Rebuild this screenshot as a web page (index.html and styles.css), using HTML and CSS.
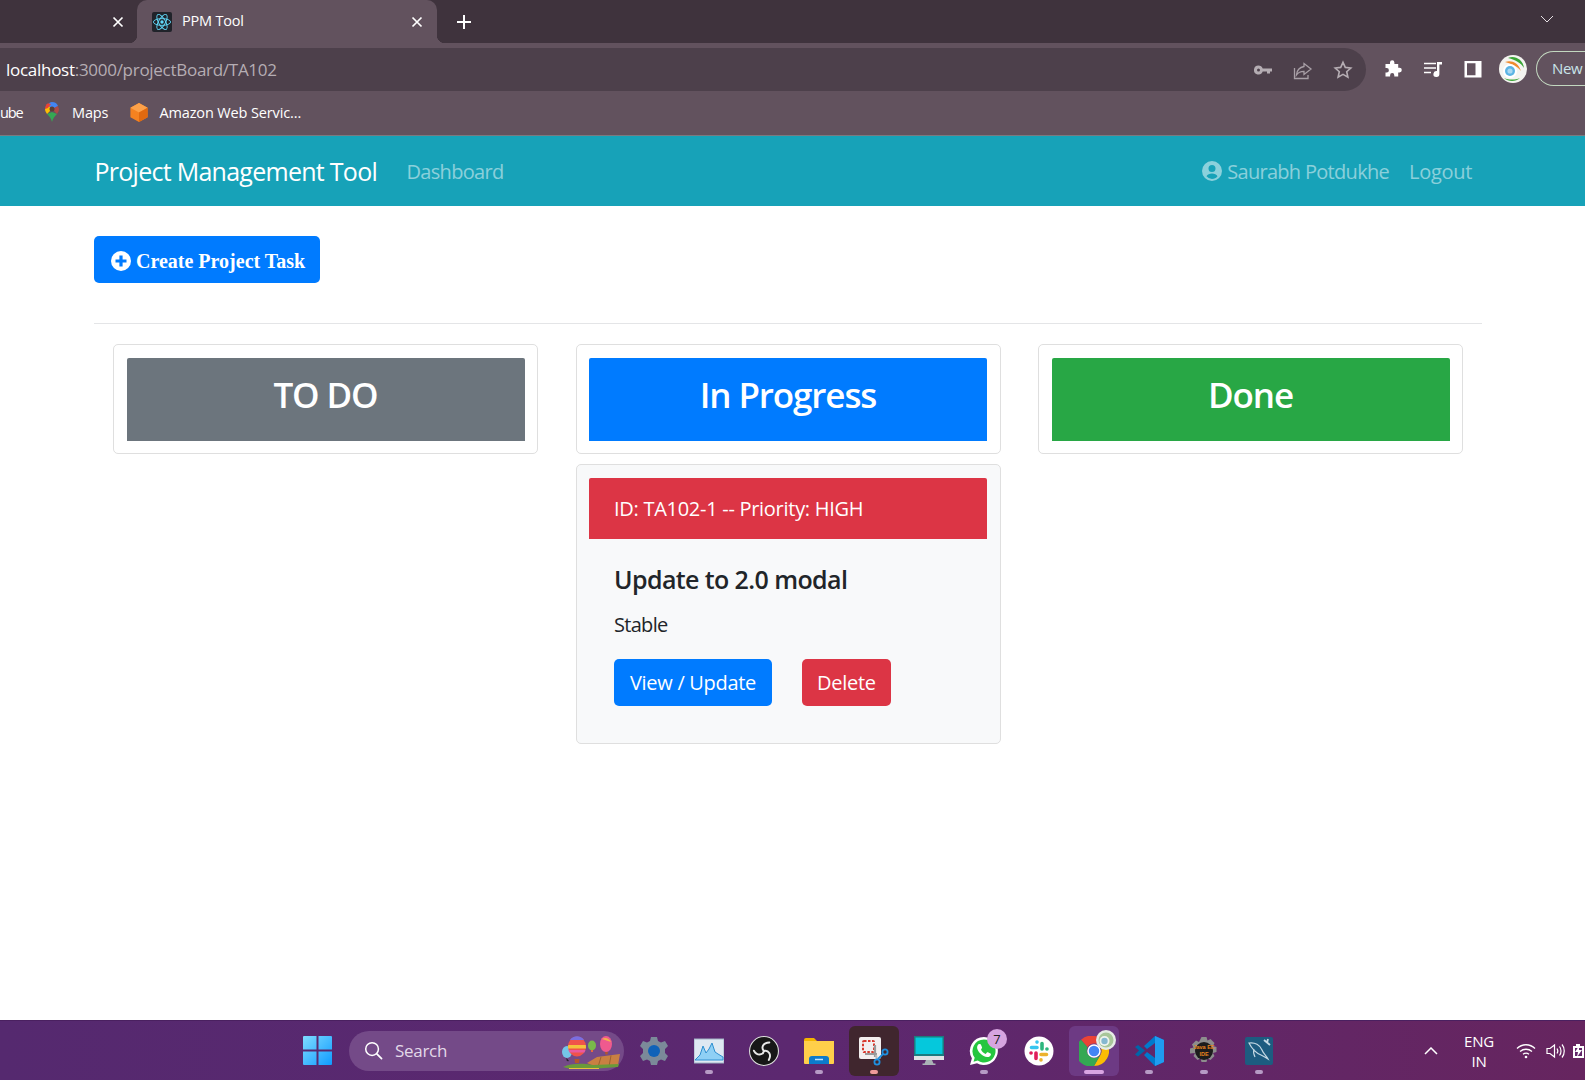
FILE: index.html
```html
<!DOCTYPE html>
<html lang="en">
<head>
<meta charset="utf-8">
<title>PPM Tool</title>
<link rel="stylesheet" href="styles.css">
</head>
<body>
<div class="tabstrip">
  <div class="tab-prev"><svg class="tab-x" viewBox="0 0 12 12"><path d="M1.5 1.5l9 9M10.5 1.5l-9 9"/></svg></div>
  <div class="tab-active">
    <svg class="favicon" viewBox="0 0 20 20"><rect width="20" height="20" rx="2" fill="#20232a"/><g fill="none" stroke="#61dafb" stroke-width=".9"><ellipse cx="10" cy="10" rx="8.6" ry="3.4"/><ellipse cx="10" cy="10" rx="8.6" ry="3.4" transform="rotate(60 10 10)"/><ellipse cx="10" cy="10" rx="8.6" ry="3.4" transform="rotate(120 10 10)"/></g><circle cx="10" cy="10" r="1.7" fill="#61dafb"/></svg>
    <span class="tab-title">PPM Tool</span>
    <svg class="tab-x" viewBox="0 0 12 12"><path d="M1.5 1.5l9 9M10.5 1.5l-9 9"/></svg>
  </div>
  <svg class="tab-plus" viewBox="0 0 16 16"><path d="M8 1v14M1 8h14"/></svg>
  <svg class="tab-down" viewBox="0 0 14 8"><path d="M1 1l6 6 6-6"/></svg>
</div>
<div class="toolbar">
  <div class="omnibox">
    <div class="url"><span class="url-host">localhost</span>:3000/projectBoard/TA102</div>
    <svg class="omni-icon" viewBox="0 0 20 20"><path fill="#b5adb3" d="M5.5 5.5a4.5 4.5 0 0 1 4.2 3H19v3h-2v2h-3v-2H9.700a4.500 4.500 0 1 1-4.200-6zm0 3a1.500 1.500 0 1 0 0 3 1.500 1.500 0 0 0 0-3z"/></svg>
    <svg class="omni-icon" viewBox="0 0 20 20"><path fill="none" stroke="#a89fa6" stroke-width="1.300" d="M11 3.500l7 5.500-7 5.500v-3.200c-3.500 0-5.800 1-7.500 3.500.4-4.500 3-7.500 7.500-8.300zM1.500 8v10.500H15V15"/></svg>
    <svg class="omni-icon" viewBox="0 0 20 20"><path fill="none" stroke="#b5adb3" stroke-width="1.600" d="M10 2.300l2.300 5.100 5.500.6-4.100 3.700 1.200 5.500L10 14.400l-4.900 2.800 1.200-5.500L2.200 8l5.500-.6z"/></svg>
  </div>
  <div class="tool-actions">
    <svg class="tool-icon" viewBox="0 0 20 20"><path fill="#fff" d="M7 3.500a2.200 2.200 0 0 1 4.400 0V5h3.800v3.800h1.300a2.300 2.300 0 0 1 0 4.600h-1.300v4.100h-3.900v-1.300a2.100 2.100 0 0 0-4.200 0v1.300H2.500v-4h1.200a2.200 2.200 0 0 0 0-4.400H2.500V5H7z"/></svg>
    <svg class="tool-icon" viewBox="0 0 20 20"><path fill="none" stroke="#fff" stroke-width="1.700" d="M1 4.500h12M1 9h12M1 13.500h7"/><path fill="#fff" d="M14 3h5v2.400h-2.600V15a3 3 0 1 1-2.400-2.900z"/></svg>
    <svg class="tool-icon" viewBox="0 0 20 20"><path fill="#fff" fill-rule="evenodd" d="M1.500 2h17v16.500h-17zM4 4.300v11.900h8.500V4.300z"/></svg>
    <svg class="avatar" viewBox="0 0 28 28"><circle cx="14" cy="14" r="14" fill="#f4f4f0"/><path fill="#3aa536" d="M9 3c6-3 15 1 16 10-3-5-8-8-16-10z"/><path fill="#ef8a2c" d="M6 7c6-2 13 0 16 9-4-5-9-7-16-9z"/><circle cx="11" cy="16" r="7" fill="#fff"/><circle cx="11" cy="16" r="5" fill="#5bb4e4"/><circle cx="11" cy="16" r="2.600" fill="#a9d8f2"/><path fill="#3aa536" d="M5 23c4 4 12 4 16 0-5 2-11 2-16 0z"/></svg>
    <div class="new-pill">New</div>
  </div>
</div>
<div class="bookmarks">
  <span class="bm-cut">ube</span>
  <div class="bm bm-maps">
    <svg class="bm-icon" viewBox="0 0 16 20"><path fill="#34a853" d="M8 20c-1-4-3-6-5-8l5-2 5 2c-2 2-4 4-5 8z"/><path fill="#fbbc04" d="M1 7c0 2 1 3.500 2 5l5-5-4-4z"/><path fill="#4285f4" d="M8 0c3 0 5 1.500 6 4l-6 3-4-4c1-2 2-3 4-3z"/><path fill="#ea4335" d="M4 1.200C2 2.400 1 4.500 1 7l3-1 3-4z"/><path fill="#ea4335" d="M15 7c0 2-1 3.500-2 5L8 7l6-3z" opacity=".55"/><circle cx="8" cy="7" r="2.500" fill="#5b3e35"/></svg>
    <span>Maps</span>
  </div>
  <div class="bm">
    <svg class="bm-icon aws" viewBox="0 0 20 22"><path fill="#f58220" d="M10 1l9 5v10l-9 5-9-5V6z"/><path fill="#fca14a" d="M10 1l9 5-9 5-9-5z"/><path fill="#e0690f" d="M10 11l9-5v10l-9 5z"/></svg>
    <span>Amazon Web Servic...</span>
  </div>
</div>
<nav class="navbar">
  <a class="brand">Project Management Tool</a>
  <a class="nav-link">Dashboard</a>
  <div class="nav-right">
    <a class="nav-link nav-user"><svg class="user-icon" viewBox="0 0 20 20"><path fill="currentColor" fill-rule="evenodd" d="M10 0a10 10 0 1 1 0 20 10 10 0 0 1 0-20zm0 4a3.500 3.500 0 1 0 0 7 3.500 3.500 0 0 0 0-7zm0 8.500c-2.500 0-4.500 1-5.500 2.700A7.600 7.600 0 0 0 10 18c2.200 0 4.200-1 5.500-2.800-1-1.700-3-2.700-5.500-2.700z"/></svg>Saurabh Potdukhe</a>
    <a class="nav-link nav-logout">Logout</a>
  </div>
</nav>
<main class="page">
  <a class="btn btn-create"><svg class="plus-icon" viewBox="0 0 20 20"><circle cx="10" cy="10" r="10" fill="#fff"/><path d="M10 4.500v11M4.500 10h11" stroke="#007bff" stroke-width="3.200"/></svg>Create Project Task</a>
  <hr class="rule">
  <div class="board">
    <section class="col">
      <div class="card"><div class="col-head head-grey"><h3>TO DO</h3></div></div>
    </section>
    <section class="col">
      <div class="card"><div class="col-head head-blue"><h3>In Progress</h3></div></div>
      <div class="card task">
        <div class="task-head">ID: TA102-1 -- Priority: HIGH</div>
        <div class="task-body">
          <h5>Update to 2.0 modal</h5>
          <p>Stable</p>
          <div class="task-actions">
            <a class="btn btn-blue">View / Update</a>
            <a class="btn btn-red">Delete</a>
          </div>
        </div>
      </div>
    </section>
    <section class="col">
      <div class="card"><div class="col-head head-green"><h3>Done</h3></div></div>
    </section>
  </div>
</main>
<footer class="taskbar">
  <svg class="win" viewBox="0 0 29 29"><defs><linearGradient id="w" x1="0" y1="0" x2="1" y2="1"><stop offset="0" stop-color="#7fdcff"/><stop offset="1" stop-color="#0f9bff"/></linearGradient></defs><path fill="url(#w)" d="M1 0h12.500v13.500H0V1a1 1 0 0 1 1-1zM15.500 0H28a1 1 0 0 1 1 1v12.500H15.500zM0 15.500h13.500V29H1a1 1 0 0 1-1-1zM15.500 15.500H29V28a1 1 0 0 1-1 1H15.500z"/></svg>
  <div class="search">
    <svg class="search-icon" viewBox="0 0 20 20"><circle cx="8.500" cy="8.500" r="6.700" fill="none" stroke="#fff" stroke-width="1.600"/><path d="M13.500 13.500l5 5" stroke="#fff" stroke-width="1.800" stroke-linecap="round"/></svg>
    <span class="search-text">Search</span>
    <svg class="balloons" viewBox="0 0 60 33"><path fill="#c98042" d="M26 27l10-6 23-3-2 11-20 3z"/><path stroke="#8a5426" stroke-width=".7" d="M40 21l-3 10M50 19.500l-2 11"/><path fill="#6a9a3a" d="M2 31c8-4 20-4 30-2l26-1-1 3-20 1.500H8z"/><path fill="#e8c23c" d="M8 32h30v1H8z"/><ellipse cx="6" cy="16" rx="5" ry="6" fill="#74c7e8"/><path stroke="#57415f" stroke-width=".7" d="M5 22l1 3h2"/><ellipse cx="16" cy="10.500" rx="9" ry="10" fill="#f0534a"/><path fill="#7a6ee0" d="M9 4c3-5 11-5 14 0z"/><path fill="#f4c23c" d="M7.200 9h17.600l.2 3.500H7z"/><path fill="#e85aa0" d="M7.500 14h17l-1 2.500h-15z"/><path fill="#b4552c" d="M13.500 23h5l-.5 4h-4z"/><ellipse cx="31" cy="9.500" rx="4" ry="5" fill="#79b94a"/><path fill="#e56a3e" d="M30 14h2v2h-2z"/><ellipse cx="45" cy="8" rx="6" ry="8" fill="#ef5a8e"/><path fill="#f4b14d" d="M41 3c3-2 7-1 9 3-3-1-6-2-9-3z"/><path fill="#b4552c" d="M44 16h3l-.5 2.500h-2z"/></svg>
  </div>
  <div class="tb-apps">
    <div class="app"><svg class="app-icon" viewBox="0 0 30 30"><path fill="#7b8a99" d="M12 1h6l1 4 3 1.500 4-1.500 3 5-3 3v4l3 3-3 5-4-1.500L19 25l-1 4h-6l-1-4-3-1.500L4 25l-3-5 3-3v-4l-3-3 3-5 4 1.500L11 5z"/><circle cx="15" cy="15" r="6" fill="#0f62b8"/></svg></div>
    <div class="app app-open"><svg class="app-icon" viewBox="0 0 30 26"><rect width="30" height="24" y="1" fill="#dfe9f2" stroke="#9fb2c4"/><path fill="#8fd0f5" stroke="#2e8fd0" d="M1 22l5-5 3-9 3 7 3-4 3-6 3 9 3 2 5 3v3H1z"/></svg></div>
    <div class="app"><svg class="app-icon" viewBox="0 0 28 28"><circle cx="14" cy="14" r="13.500" fill="#171717" stroke="#ddd"/><g fill="none" stroke="#e8e8e8" stroke-width="1.800" stroke-linecap="round"><path id="obs-arm" d="M14 14c-3-3-1-8 5-8"/><path d="M14 14c-3-3-1-8 5-8" transform="rotate(120 14 14)"/><path d="M14 14c-3-3-1-8 5-8" transform="rotate(240 14 14)"/></g></svg></div>
    <div class="app app-open"><svg class="app-icon" viewBox="0 0 30 28"><path fill="#f4b400" d="M0 3a2 2 0 0 1 2-2h8l3 3h-13z"/><path fill="#ffcf4a" d="M0 4h30v22a1 1 0 0 1-1 1H1a1 1 0 0 1-1-1z"/><path fill="#0b7bcb" d="M5 22a3 3 0 0 1 3-3h14a3 3 0 0 1 3 3v5H5z"/><path stroke="#bfe3ff" stroke-width="1.500" d="M11 22.500h8"/></svg></div>
    <div class="app app-snip"><svg class="app-icon" viewBox="0 0 30 30"><rect width="22" height="22" x="0" y="1" rx="2" fill="#f3efef"/><rect x="4" y="5" width="11" height="11" rx="1" fill="none" stroke="#d83a2e" stroke-width="2" stroke-dasharray="2.500 1.500"/><path stroke="#9a9a9a" stroke-width="2.200" d="M16 9v12M6 18h12"/><path stroke="#bbb" stroke-width="2" d="M17 19l1 5"/><circle cx="18" cy="26" r="2.600" fill="none" stroke="#1e90e0" stroke-width="1.800"/><circle cx="26" cy="16" r="2.600" fill="none" stroke="#1e90e0" stroke-width="1.800"/><path stroke="#1e90e0" stroke-width="1.800" d="M19 23l5-5"/></svg></div>
    <div class="app"><svg class="app-icon" viewBox="0 0 30 30"><rect x="0" y="0" width="30" height="20" fill="#1b7b7f"/><rect x="1.500" y="1.500" width="27" height="16.500" fill="#05c8dc"/><rect x="0" y="20" width="30" height="4" fill="#dfe3e5"/><path fill="#aab2b6" d="M12 24h6l1.500 3.500h2V29h-13v-1.500h2z"/></svg></div>
    <div class="app app-open"><svg class="app-icon wa" viewBox="0 0 30 30"><path fill="#fff" d="M15 1a14 14 0 1 1-7 26.200L1 29l1.900-6.800A14 14 0 0 1 15 1z"/><path fill="#25c63f" d="M15 3.500a11.500 11.500 0 1 1-6.300 21.100L4.500 25.700l1.200-4A11.500 11.500 0 0 1 15 3.500z"/><path fill="#fff" d="M10.500 8c1 0 1.300.3 1.700 1.300l.8 2c.2.600 0 1-.8 2-.2.300-.2.500 0 .8 1 1.700 2.200 2.800 3.900 3.700.3.200.6.100.8-.1l1-1.200c.3-.4.600-.4 1-.2l2.600 1.200c.5.300.5.500.3 1.400-.4 1.300-2.100 2.400-3.600 2.200-4.800-.7-9.400-5.200-10.100-9.200C8 10 9 8 10.500 8z"/></svg><span class="badge">7</span></div>
    <div class="app"><svg class="app-icon" viewBox="0 0 30 30"><circle cx="15" cy="15" r="14.500" fill="#fff"/><g stroke-width="3.600" stroke-linecap="round"><path stroke="#36c5f0" d="M13 11.500H7.500M13 6v.1"/><path stroke="#2eb67d" d="M18 13V7.500M23 13h-.1"/><path stroke="#ecb22e" d="M17 18.500h5.500M17 24v-.1"/><path stroke="#e01e5a" d="M12 17v5.500M7 17h.1"/></g></svg></div>
    <div class="app app-active"><svg class="app-icon chrome" viewBox="0 0 30 30"><path fill="#ea4335" d="M15 0a15 15 0 0 1 13 7.500H15A7.500 7.500 0 0 0 8.500 11.300L2 3.800A15 15 0 0 1 15 0z"/><path fill="#fbbc04" d="M28 7.500A15 15 0 0 1 15 30l6.500-11.300A7.500 7.500 0 0 0 21.500 11z"/><path fill="#34a853" d="M2 3.800A15 15 0 0 0 15 30l6.500-11.300a7.500 7.500 0 0 1-13-7.400z"/><circle cx="15" cy="15" r="6" fill="#4285f4" stroke="#fff" stroke-width="1.500"/></svg><svg class="chrome-badge" viewBox="0 0 20 20"><circle cx="10" cy="10" r="10" fill="#e6ece6"/><circle cx="10" cy="10" r="7.500" fill="#a8c69a"/><circle cx="8.500" cy="11" r="5" fill="#f0f4ef"/><circle cx="8.500" cy="11" r="3.200" fill="#85b8d0"/></svg></div>
    <div class="app app-open"><svg class="app-icon" viewBox="0 0 30 30"><path fill="#0065a9" d="M1 11l3-2 7 5.500-7 6-3-2 4-4z"/><path fill="#007acc" d="M21 0l9 4v22l-9 4-11-11 3-3 8 6V7l-8 6-3-3z"/><path fill="#1f9cf0" d="M21 0l9 4v22l-9 4z"/></svg></div>
    <div class="app app-open"><svg class="app-icon" viewBox="0 0 30 30"><path fill="#8d8d8d" d="M12.500 1h5l1 3.500 3-1.500 4 4-1.500 3 3.500 1v5l-3.500 1 1.500 3-4 4-3-1.500-1 3.500h-5l-1-3.500-3 1.500-4-4 1.500-3L1 17.500v-5l3.500-1-1.500-3 4-4 3 1.500z"/><circle cx="15" cy="15" r="9" fill="#1c1c1c"/><text class="java-text" x="15" y="13" text-anchor="middle">Java EE</text><text class="java-text" x="15" y="20" text-anchor="middle">IDE</text></svg></div>
    <div class="app app-open"><svg class="app-icon" viewBox="0 0 30 30"><rect width="28" height="28" x="1" y="1" rx="2" fill="#1d5c80"/><path fill="none" stroke="#c4d9e4" stroke-width="1.200" d="M5 7c6-1 11 2 13 7 1 3 4 5 6 9-3-2-5-3-7-4-5-2-9-6-12-12zM10 13c-1 3 0 6 1 8"/><path stroke="#c4d9e4" stroke-width="1.800" d="M20 4l6 5M24 3l-1 4"/></svg></div>
  </div>
  <div class="tray">
    <svg class="tray-up" viewBox="0 0 14 8"><path d="M1 7l6-6 6 6"/></svg>
    <div class="lang">ENG<br>IN</div>
    <svg class="tray-icon tray-wifi" viewBox="0 0 20 16"><path fill="none" stroke="#fff" stroke-width="1.300" d="M1 5.500c5-5 13-5 18 0M4 8.500c3.500-3 8.500-3 12 0M7 11.300c1.800-1.400 4.200-1.400 6 0"/><circle cx="10" cy="14" r="1.300" fill="#fff"/></svg>
    <svg class="tray-icon" viewBox="0 0 20 16"><path fill="none" stroke="#fff" stroke-width="1.200" d="M1 5.500h3L8.500 2v12L4 10.500H1zM11 5.500c1 1.500 1 3.500 0 5M13.500 3.500c2 2.500 2 6.500 0 9M16 1.500c3 3.500 3 9.500 0 13"/></svg>
    <svg class="tray-batt" viewBox="0 0 12 16"><path fill="#fff" d="M1 3h3V1h4v2h4v12H1z"/><path fill="#62266a" d="M3 5h7v8H3z"/><path fill="#fff" d="M7 3L3 9h3l-1 5 5-7H7z"/></svg>
  </div>
</footer>
</body>
</html>
```

FILE: styles.css
```css
* { box-sizing: border-box; }
html, body { margin: 0; height: 100%; }
body {
  width: 1585px;
  height: 1080px;
  overflow: hidden;
  display: flex;
  flex-direction: column;
  background: #fff;
  color: #212529;
  font-family: "Open Sans", "Noto Sans", "Liberation Sans", sans-serif;
}
svg { display: block; flex: none; }

/* Browser chrome */
.tabstrip {
  height: 43px;
  flex: none;
  display: flex;
  align-items: center;
  background: #3f333d;
  color: #fff;
  font-size: 14px;
}
.tab-prev { width: 137px; flex: none; display: flex; justify-content: flex-end; padding-right: 13px; }
.tab-x { width: 12px; height: 12px; fill: none; stroke: #fff; stroke-width: 1.7; }
.tab-active {
  position: relative;
  width: 300px;
  height: 43px;
  flex: none;
  display: flex;
  align-items: center;
  padding: 0 14px 0 15px;
  background: #62525e;
  border-radius: 10px 10px 0 0;
}
.tab-active::before, .tab-active::after {
  content: "";
  position: absolute;
  bottom: 0;
  width: 8px;
  height: 8px;
}
.tab-active::before { left: -8px; background: radial-gradient(circle at 0 0, transparent 8px, #62525e 8.5px); }
.tab-active::after { right: -8px; background: radial-gradient(circle at 100% 0, transparent 8px, #62525e 8.5px); }
.favicon { width: 20px; height: 20px; margin-right: 10px; }
.tab-title { flex: 1; font-size: 14.5px; letter-spacing: -.2px; padding-bottom: 2px; }
.tab-plus { width: 16px; height: 16px; margin-left: 19px; fill: none; stroke: #fff; stroke-width: 2; }
.tab-down { width: 14px; height: 8px; margin-left: auto; margin-right: 31px; margin-top: -6px; fill: none; stroke: #e6e0e4; stroke-width: 1; }

.toolbar {
  height: 49px;
  flex: none;
  display: flex;
  background: #62525e;
  padding-top: 5px;
}
.omnibox {
  width: 1366px;
  height: 43px;
  flex: none;
  display: flex;
  align-items: center;
  padding-left: 6px;
  padding-right: 13px;
  gap: 20px;
  background: #4d404b;
  border-radius: 0 22px 22px 0;
}
.url { flex: 1; font-size: 17px; letter-spacing: -.28px; color: #b5adb3; }
.url-host { color: #fff; }
.omni-icon { width: 20px; height: 20px; }
.tool-actions { display: flex; flex: none; align-items: center; height: 43px; margin-left: 17px; margin-top: -1px; }
.tool-icon { width: 20px; height: 20px; margin-right: 20px; }
.avatar { width: 28px; height: 28px; margin-left: -4px; }
.new-pill {
  flex: none;
  margin-left: 9px;
  width: 60px;
  height: 35px;
  line-height: 32px;
  padding-left: 15px;
  border: 1.5px solid #c3d8c0;
  border-right: 0;
  border-radius: 18px 0 0 18px;
  color: #c9e4ea;
  font-size: 15px;
  letter-spacing: -.3px;
}

.bookmarks {
  height: 44px;
  flex: none;
  display: flex;
  align-items: center;
  background: #62525e;
  color: #fff;
  font-size: 14.500px;
  letter-spacing: -.13px;
  padding-bottom: 3px;
  border-bottom: 1px solid #7a7a80;
}
.bm-cut { width: 22px; flex: none; white-space: nowrap; letter-spacing: -1.100px; }
.bm { display: flex; align-items: center; }
.bm-maps { margin-left: 22px; margin-right: 21px; }
.bm-icon { width: 16px; height: 20px; margin-right: 12px; }
.aws { width: 20px; height: 21px; margin-right: 10px; }

/* App nav */
.navbar {
  height: 70px;
  flex: none;
  display: flex;
  align-items: center;
  padding: 0 113px 0 94.500px;
  background: #17a2b8;
}
.brand { font-size: 25px; color: #fff; letter-spacing: -.73px; margin-right: 29.500px; }
.nav-link { font-size: 20px; color: rgba(255, 255, 255, .5); letter-spacing: -.7px; }
.nav-logout { letter-spacing: -.3px; }
.nav-right { margin-left: auto; display: flex; align-items: center; gap: 20px; }
.nav-user { display: flex; align-items: center; }
.user-icon { width: 20px; height: 20px; margin-right: 5px; color: rgba(255, 255, 255, .5); }

/* Board */
.page { flex: 1; width: 1388px; margin-left: 94px; padding-top: 30px; }
.btn {
  display: inline-flex;
  align-items: center;
  height: 47px;
  padding: 0 16px;
  border-radius: 5px;
  font-size: 20px;
  color: #fff;
  letter-spacing: -.3px;
}
.btn-create {
  padding: 4px 15px 0 17px;
  background: #007bff;
  font-family: "Liberation Serif", serif;
  font-weight: 700;
  letter-spacing: 0;
}
.plus-icon { width: 20px; height: 20px; margin-right: 5px; margin-top: -2px; }
.btn-blue { background: #007bff; }
.btn-red { padding: 0 15px; background: #dc3545; }
.rule { margin: 40px 0 20px; border: 0; border-top: 1px solid #e4e5e7; }
.board { display: flex; padding: 0 19px; gap: 37.500px; }
.col { width: 425px; flex: none; }
.card {
  padding: 13px 12.500px 12px;
  background: #fff;
  border: 1px solid #dfdfdf;
  border-radius: 5px;
  margin-bottom: 10px;
}
.col-head {
  height: 83px;
  padding-top: 16px;
  text-align: center;
  color: #fff;
  border-radius: 2px 2px 0 0;
}
.col-head h3 { margin: 0; font-size: 35px; line-height: 42px; font-weight: 600; letter-spacing: -1.100px; }
.head-grey { background: #6c757d; }
.head-blue { background: #007bff; }
.head-green { background: #28a745; }
.task { background: #f8f9fa; height: 280px; }
.task-head {
  height: 61px;
  line-height: 62px;
  padding-left: 25px;
  background: #dc3545;
  color: #fff;
  font-size: 20px;
  letter-spacing: -.28px;
  border-radius: 2px 2px 0 0;
}
.task-body { padding: 25px 25px 0; }
.task-body h5 { margin: 0 0 16px; font-size: 25px; line-height: 30px; font-weight: 600; letter-spacing: -.6px; }
.task-body p { margin: 0 0 19px; font-size: 20px; line-height: 30px; letter-spacing: -.7px; }
.task-actions { display: flex; gap: 30px; }

/* Windows taskbar */
.taskbar {
  height: 60px;
  flex: none;
  display: flex;
  align-items: center;
  padding-left: 303px;
  background: linear-gradient(90deg, #55296f, #5c2870 50%, #66255f);
  border-top: 1px solid #4a2060;
  color: #fff;
}
.win { width: 29px; height: 29px; margin-right: 17px; }
.search {
  width: 275px;
  height: 40px;
  flex: none;
  display: flex;
  align-items: center;
  padding-left: 15px;
  background: #744a88;
  border-radius: 20px;
}
.search-icon { width: 19px; height: 19px; margin-right: 12px; }
.search-text { flex: 1; font-size: 17px; color: #e3d9e8; letter-spacing: -.3px; }
.balloons { width: 60px; height: 33px; margin-right: 3px; margin-top: 3px; }
.tb-apps { display: flex; flex: none; margin-left: 2px; }
.app {
  position: relative;
  width: 55px;
  height: 50px;
  flex: none;
  display: flex;
  align-items: center;
  justify-content: center;
}
.app-icon { width: 30px; height: 30px; }
.app-open::after, .app-snip::after, .app-active::after {
  content: "";
  position: absolute;
  left: 50%;
  bottom: 2px;
  width: 8px;
  height: 4px;
  margin-left: -4px;
  background: #b69ac5;
  border-radius: 2px;
}
.app-snip, .app-active { width: 50px; margin: 0 2.500px; border-radius: 6px; }
.app-snip { background: #40262e; }
.app-snip::after { background: #ef9a9a; }
.app-active { background: #6d3a84; }
.app-active::after { width: 20px; margin-left: -10px; background: #d9a5e3; }
.chrome-badge { position: absolute; top: 4px; right: 3px; width: 20px; height: 20px; }
.badge {
  position: absolute;
  top: 3px;
  right: 4px;
  width: 20px;
  height: 20px;
  border-radius: 50%;
  background: #d6a5e0;
  color: #222;
  font-size: 13px;
  line-height: 20px;
  text-align: center;
}
.java-text { font-family: "Liberation Sans", sans-serif; font-size: 5.500px; font-weight: 700; fill: #e8841c; }
.tray { margin-left: 138px; flex: none; display: flex; align-items: center; }
.tray-up { width: 14px; height: 8px; fill: none; stroke: #fff; stroke-width: 1.500; margin-right: 16px; }
.lang { width: 50px; text-align: center; font-size: 15px; line-height: 20px; letter-spacing: -.2px; }
.tray-icon { width: 20px; height: 16px; margin-left: 10px; }
.tray-wifi { margin-left: 12px; }
.tray-batt { width: 12px; height: 16px; margin-left: 6px; }
```
